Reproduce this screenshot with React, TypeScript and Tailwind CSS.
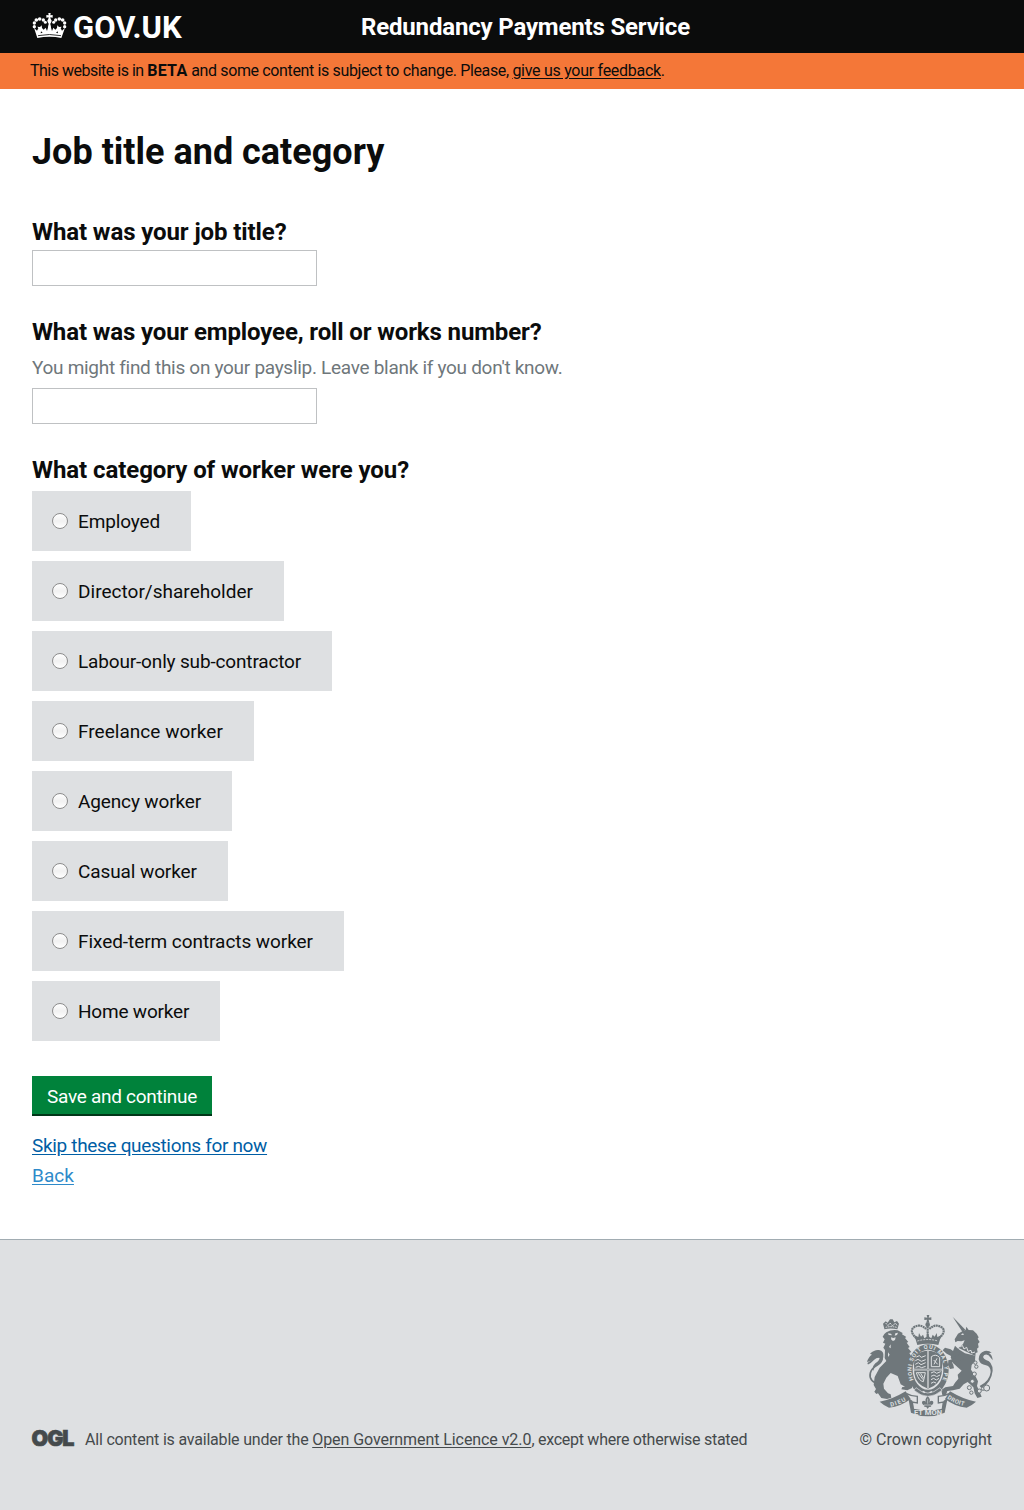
const categories = [
  { label: "Employed", box: "w-[159px] tracking-[-0.14px]" },
  { label: "Director/shareholder", box: "w-[252px] tracking-[0.02px]" },
  { label: "Labour-only sub-contractor", box: "w-[300px] tracking-[-0.16px]" },
  { label: "Freelance worker", box: "w-[222px] tracking-[0.03px]" },
  { label: "Agency worker", box: "w-[200px] tracking-[-0.14px]" },
  { label: "Casual worker", box: "w-[196px] tracking-[-0.1px]" },
  { label: "Fixed-term contracts worker", box: "w-[312px] tracking-[-0.06px]" },
  { label: "Home worker", box: "w-[188px] tracking-[-0.2px]" },
];

function CrownIcon() {
  const pearls = [
    [43, 80, 5], [43, 69, 5], [49, 60, 5.5], [59, 57, 5.5], [70, 60, 5], [76, 67, 4.5],
    [134, 80, 5], [134, 69, 5], [128, 60, 5.5], [118, 57, 5.5], [107, 60, 5], [101, 67, 4.5],
  ];
  return (
    <svg viewBox="36 36 105 84" className="h-7 w-[35px]" fill="#fff" aria-hidden="true">
      {pearls.map(([cx, cy, r], i) => (
        <circle key={i} cx={cx} cy={cy} r={r} />
      ))}
      <path d="M85 39h7l-1 7 7-1v8l-7-1 1 5q5 4 2 9l-3 5 2 15h-9l2-15-3-5q-3-5 2-9l1-5-7 1v-8l7 1z" />
      <path d="M42 83l9 9 4-7-3-5 8 1 5-5 1 8 5 5 6-6 4 10 5-17h5l5 17 4-10 6 6 5-5 1-8 5 5 8-1-3 5 4 7 9-9-11 31q-35-8-72 0z" />
      <path d="M54 107q34-7 69 0" fill="none" stroke="#0b0c0c" strokeWidth="2.5" />
      <path d="M63 94l5 4-6 2zM113 94l-5 4 6 2z" fill="#0b0c0c" />
    </svg>
  );
}

function RoyalArms() {
  const ink = "#6f777b";
  const paper = "#dee0e2";
  return (
    <svg viewBox="36 30 375 306" className="h-[102px] w-[125px] overflow-visible" fill={ink} aria-hidden="true">
      {/* lion */}
      <path d="M88 71l-4-15 8-7 6 4 7-10 8 0 5 9 8-4 6 8-5 17q-20-5-39 0z" />
      <path d="M92 54l7 8 6-8 8 9 8-9 5 7M92 67q17-4 33 0" fill="none" stroke={paper} strokeWidth="3" strokeDasharray="5 2" />
      <path d="M94 82q15-9 34-6l15 8-2 4 13 8-4 3 10 12-5 2 9 13-5 3 10 12-6 3 7 12-4 4 2 25-10 6 4 22 12 16-3 20-14 7-18-3 3-7 8-1-13-7-9-25-21-9-13 14-9 18 2 15 12 14 8 3 2 10-13 4-17-3-10-14-5 2-6-7 5-8-7-12 3-24 15-28 20-20-5-9 1-24-5-7 6-12-7-3 5-10-6-8 5-8z" />
      <path d="M99 85l9 1 3 5-10-1zM121 85l8-2-3 7-7 2zM108 97l7 2 7-2-2 8-6 3-5-4zM99 142l5 7-5 7zM107 118l-5 8 5 4z" fill={paper} />
      <path d="M74 239q-34-10-28-35 4-14 20-23 13-8 15-18 1-8-9-8-10 1-17 8-9 10-17 13" fill="none" stroke={ink} strokeWidth="5" />
      <path d="M36 171q5-17 15-22l-6-3q14-13 27-11 16 3 13 21-3 17-17 23-14 7-12 20-7-13 5-24 12-8 13-17-8-4-18 4-10 8-20 9z" />
      {/* unicorn: horn and head */}
      <path d="M293 35L331 74l-8 8z" />
      <path d="M322 79l10-4 2-10 7 10 13 1 11 10 6 11-3 4 6 10-5 5 2 11-5 4 2 11-6 2-1 9-50-24 13-12 5-11-10 3-11-1-7 4-2-9 10-17z" />
      <path d="M318 88l6-3 3 4-6 1z" fill={paper} />
      <path d="M308 119l9 6 5-4 5 11 8-5 4 12 9-3 2 8 10-3" fill="none" stroke={paper} strokeWidth="3" />
      {/* unicorn: body and legs */}
      <path d="M300 122l10 10 20 13 31 7-1 16-10 12-2 14 12 17 9 18-3 14 8 18 6 14-13 4-8-14-4-18-17-16-12 7-12 13-20 5-17 2-4 12-11 1-3-16 12-8 23-4 6-10 10-12-2-12 12-12-12-10-14-13-7-17z" />
      <path d="M314 147l-20 9-19-10-12-10 7-8 17 5 10 7 13-10z" />
      <path d="M313 150l-14 11-19 5-1 14 6 12 12-2-2-10-4-8 14-2 20-8z" />
      <path d="M374 243q30-15 33-42 0-17-14-20-18-2-22-18 0-20 18-25 13-2 21 5l-8 1q10 6 11 22l-6-8q-9-13-19-8-9 7 5 15 20 5 20 32-4 37-34 52z" />
      <g fill={paper} stroke={ink} strokeWidth="3">
        <circle cx="361" cy="173" r="5" />
        <circle cx="364" cy="185" r="5" />
        <circle cx="358" cy="207" r="6" />
        <circle cx="352" cy="229" r="6" />
        <circle cx="343" cy="248" r="6" />
        <circle cx="349" cy="263" r="5" />
        <circle cx="373" cy="258" r="6" />
        <circle cx="384" cy="251" r="5" />
        <circle cx="395" cy="249" r="9" />
      </g>
      {/* imperial crown */}
      <path d="M215 30h8l-2 8 8-1v8l-8-1 2 9h-9l2-9-8 1v-8l9 1z" />
      <circle cx="218" cy="59" r="7" />
      <path
        d="M184 100q-21-20-9-32 20-14 38 4M252 100q22-20 10-32-21-14-39 4M218 64v30"
        fill="none" stroke={ink} strokeWidth="6.5" strokeDasharray="6 1.5"
      />
      <path d="M178 91l12 5 2-12 6 11 6-6 4 11 6-4 4-14 5 14 6 4 4-11 6 6 6-11 2 12 12-5-9 29q-32-8-63 0z" />
      <path d="M187 108q31-9 62 0" fill="none" stroke={paper} strokeWidth="2.5" strokeDasharray="6 3" />
      {/* garter and shield */}
      <ellipse cx="219" cy="195" rx="62" ry="77" />
      <ellipse cx="219" cy="194" rx="46" ry="60" fill={paper} />
      <path d="M177 176q2-38 42-39 40 1 43 39l-2 30q-6 34-41 45-37-13-41-45z" />
      <path d="M219 138v112M176 194h86" stroke={paper} strokeWidth="5" />
      <path d="M219 138v112M176 194h86" stroke={ink} strokeWidth="1.6" />
      <g fill="none" stroke={paper} strokeWidth="3">
        <path d="M184 156l9-4 6 5 13-5M181 167l8-4 10 6 13-5M181 178l9-5 8 6 14-6M182 187l9-3 9 4 12-4" />
        <path d="M228 204l9-4 8 5 12-5M228 214l9-4 8 5 10-5M228 224l8-4 8 5 8-5M228 235l8-4 7 3" />
        <path d="M229 185v-30q14-10 25 3v27zM237 178l9-18M236 165l12 13" />
        <path d="M184 203h27l-6 27q-14-2-21-27zM190 205l14 19M197 205l9 15" />
      </g>
      <path id="garter-path" d="M177 228A49 64 0 1 1 261 228" fill="none" />
      <text fill={paper} fontFamily="Roboto" fontWeight="700" fontSize="17">
        <textPath href="#garter-path" startOffset="3" textLength="278">HONI SOIT QUI MAL Y PENSE</textPath>
      </text>
      <path d="M183 248q35 32 72 0l6 8q-42 36-84 0z" stroke={paper} strokeWidth="2" />
      <path d="M203 259l7 4M224 263l7-3" stroke={paper} strokeWidth="4" />
      {/* motto scroll */}
      <path d="M74 290q35-5 78-31l15 23q-30 23-65 26-16-7-28-18z" />
      <path d="M363 290q-35-5-78-31l-15 23q30 23 65 26 16-7 28-18z" />
      <path d="M155 266q14 8 32 8v20l-15-3 3 22M282 266q-14 8-32 8v20l15-3-3 22" fill="none" stroke={ink} strokeWidth="4" />
      <path d="M160 279l12 8 4 24q43 9 86 0l4-24 12-8-9 44q-51 22-101 0z" />
      <g fill={paper} fontFamily="Roboto" fontWeight="700">
        <path id="dieu-path" d="M107 305q28-5 56-24" fill="none" />
        <text fontSize="18"><textPath href="#dieu-path" textLength="50">DIEU</textPath></text>
        <path id="droit-path" d="M276 280q24 18 60 25" fill="none" />
        <text fontSize="18"><textPath href="#droit-path" textLength="56">DROIT</textPath></text>
        <text x="177" y="331" fontSize="20" textLength="84" lengthAdjust="spacingAndGlyphs">ET MON</text>
      </g>
      <path d="M218 274q11 9 4 20 5-10 12-5 4 8-7 13l2 3-7 1-4 6-4-6-7-1 2-3q-11-5-7-13 8-5 12 5-7-11 4-20z" />
      <path d="M218 281v15M207 300h22" stroke={paper} strokeWidth="1.8" />
    </svg>
  );
}

const question = "text-2xl leading-[30px] font-bold";
const textbox = "block h-9 w-[285px] border border-[#bfc1c3] bg-white px-1 outline-none";

export default function App() {
  return (
    <div className="flex min-h-[1510px] flex-col bg-white font-['Roboto',sans-serif] text-[#0b0c0c]">
      <header className="flex h-[53px] items-start bg-[#0b0c0c] pl-8 text-white">
        <a className="flex w-[329px] items-start pt-3">
          <CrownIcon />
          <span className="ml-[6px] text-[31px] leading-[31px] font-bold tracking-[0.1px]">GOV.UK</span>
        </a>
        <span className="pt-3 text-2xl leading-[30px] font-bold tracking-[-0.17px]">Redundancy Payments Service</span>
      </header>

      <div className="h-9 bg-[#f47738] pl-[30px] text-base leading-9 whitespace-nowrap">
        <span className="tracking-[-0.5px]">This website is in </span>
        <strong className="font-bold tracking-[0.3px]">BETA</strong>
        <span className="tracking-[-0.36px]"> and some content is subject to change. Please, </span>
        <a className="tracking-[-0.28px] underline underline-offset-2">give us your feedback</a>.
      </div>

      <main className="px-8 pt-[43px]">
        <h1 className="text-4xl leading-10 font-bold">Job title and category</h1>

        <form className="mt-[45px]">
          <label className="block">
            <span className={`block tracking-[-0.1px] ${question}`}>What was your job title?</span>
            <input type="text" className={`mt-[3px] ${textbox}`} />
          </label>

          <label className="mt-[31px] block">
            <span className={`block tracking-[-0.13px] ${question}`}>What was your employee, roll or works number?</span>
            <span className="mt-2 block text-[19px] leading-[25px] tracking-[-0.29px] text-[#6f777b]">
              You might find this on your payslip. Leave blank if you don't know.
            </span>
            <input type="text" className={`mt-2 ${textbox}`} />
          </label>

          <fieldset className="mt-[31px]">
            <legend className={`tracking-[-0.07px] ${question}`}>What category of worker were you?</legend>
            <div className="mt-[6px] flex flex-col gap-[10px]">
              {categories.map((c) => (
                <label key={c.label} className={`flex h-[60px] items-center bg-[#dee0e2] pl-5 text-[19px] whitespace-nowrap ${c.box}`}>
                  <input
                    type="radio"
                    name="category"
                    className="mr-[10px] size-4 shrink-0 appearance-none rounded-full border border-[#8c8c8c] bg-gradient-to-b from-white via-[#f1f1f1] to-white"
                  />
                  <span className="pt-[3px]">{c.label}</span>
                </label>
              ))}
            </div>
          </fieldset>

          <button
            type="button"
            className="mt-[35px] block h-10 w-[180px] border-b-2 border-[#003618] bg-[#00823b] pt-[3px] text-[19px] leading-[35px] tracking-[-0.28px] text-white"
          >
            Save and continue
          </button>
        </form>

        <div className="mt-[15px] flex flex-col items-start text-[19px] leading-[30px]">
          <a className="tracking-[-0.33px] text-[#005ea5] underline underline-offset-2">Skip these questions for now</a>
          <a className="tracking-[0.05px] text-[#2e8aca] underline underline-offset-2">Back</a>
        </div>
      </main>

      <footer className="mt-12 flex h-[271px] items-start justify-between border-t border-[#a1acb2] bg-[#dee0e2] px-8 pt-[75px] text-base leading-5 text-[#454a4c]">
        <div className="flex pt-[113px]">
          <svg viewBox="0 0 41 20" className="h-5 w-[41px] overflow-visible" aria-label="OGL">
            <text x="-0.5" y="18" textLength="42" lengthAdjust="spacingAndGlyphs" fontFamily="Inter" fontWeight="900" fontSize="22" letterSpacing="-1" fill="#454a4c" stroke="#454a4c" strokeWidth="0.7">OGL</text>
          </svg>
          <p className="ml-3 pt-[2px] whitespace-nowrap">
            <span className="tracking-[-0.2px]">All content is available under the </span>
            <a className="tracking-[-0.07px] underline underline-offset-2">Open Government Licence v2.0</a>
            <span className="tracking-[-0.27px]">, except where otherwise stated</span>
          </p>
        </div>
        <div className="flex flex-col items-end">
          <RoyalArms />
          <span className="mt-[13px] whitespace-nowrap">© Crown copyright</span>
        </div>
      </footer>
    </div>
  );
}
